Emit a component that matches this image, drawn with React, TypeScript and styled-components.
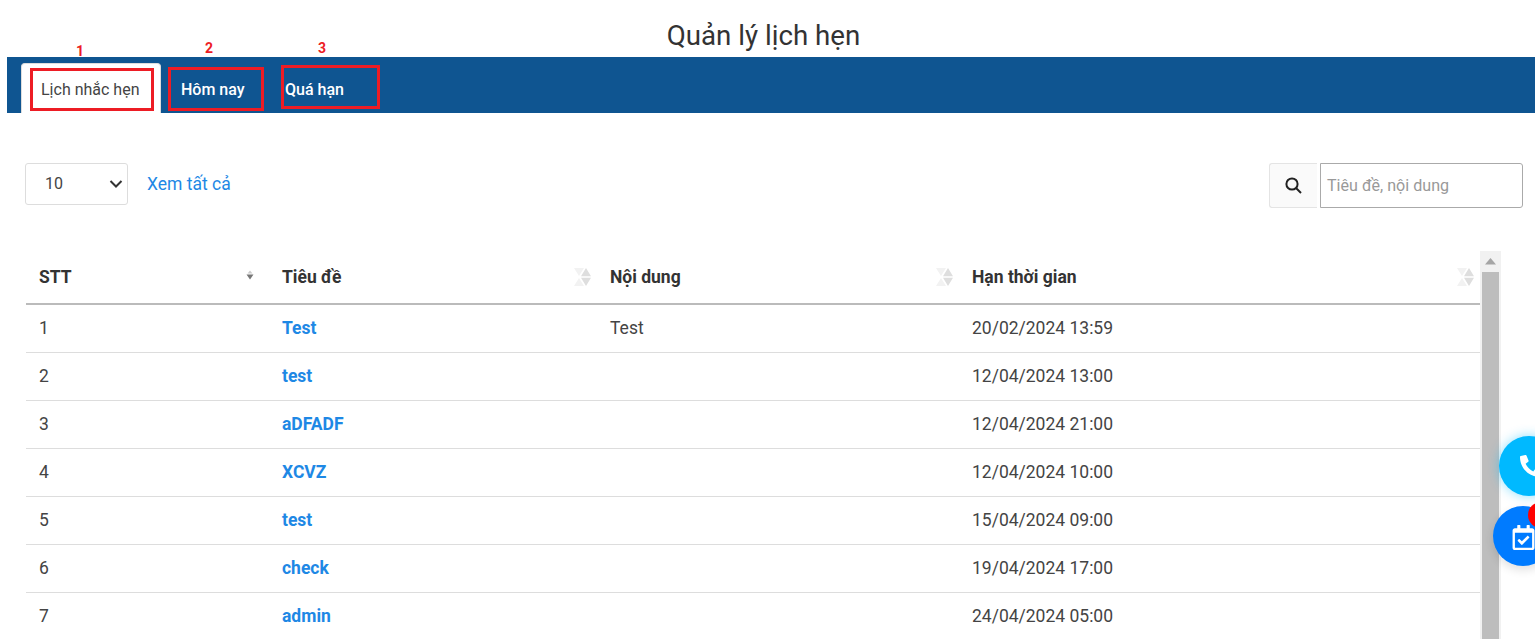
import React from "react";
import styled, { createGlobalStyle } from "styled-components";
import { FaPhoneAlt, FaRegCalendarCheck } from "react-icons/fa";

const GlobalStyle = createGlobalStyle`
  html, body {
    margin: 0;
    height: 639px;
    overflow: hidden;
    background: #fff;
    font-family: Roboto, "Liberation Sans", sans-serif;
    color: #333;
  }
`;

const Page = styled.div`
  padding: 0 12px 0 7px;
  height: 639px;
  overflow: hidden;
`;

const Title = styled.h1`
  margin: 0;
  height: 57px;
  padding: 18px 3px 0 0;
  box-sizing: border-box;
  text-align: center;
  font-size: 27.7px;
  line-height: 35px;
  font-weight: 400;
  color: #333;
`;

const TabBar = styled.div`
  display: flex;
  height: 56px;
  margin-right: -12px;
  padding: 6px 0 0 14px;
  box-sizing: border-box;
  background: #0f5591;
`;

const Tab = styled.div<{ $active?: boolean; $width: number; $pad: number }>`
  position: relative;
  width: ${(p) => p.$width}px;
  padding-left: ${(p) => p.$pad}px;
  box-sizing: border-box;
  line-height: ${(p) => (p.$active ? 52 : 54)}px;
  font-size: 16px;
  font-weight: ${(p) => (p.$active ? 400 : 500)};
  color: ${(p) => (p.$active ? "#444" : "#fff")};
  background: ${(p) => (p.$active ? "#fff" : "transparent")};
  border: ${(p) => (p.$active ? "1px solid #ddd" : "none")};
  border-bottom: none;
  border-radius: 4px 4px 0 0;
`;

const Marker = styled.span<{ $left: number; $top: number; $width: number; $height: number }>`
  position: absolute;
  left: ${(p) => p.$left}px;
  top: ${(p) => p.$top}px;
  width: ${(p) => p.$width}px;
  height: ${(p) => p.$height}px;
  box-sizing: border-box;
  border: 3px solid #ed1c24;
`;

const MarkerNumber = styled.span<{ $left: number; $top: number }>`
  position: absolute;
  left: ${(p) => p.$left}px;
  top: ${(p) => p.$top}px;
  font-size: 14px;
  line-height: 16px;
  font-weight: 700;
  color: #ed1c24;
`;

const Toolbar = styled.div`
  display: flex;
  justify-content: space-between;
  align-items: flex-start;
  height: 88px;
  padding: 50px 0 0 18px;
`;

const LeftTools = styled.div`
  display: flex;
  align-items: center;
  gap: 19px;
`;

const SelectBox = styled.div`
  display: flex;
  align-items: center;
  justify-content: space-between;
  width: 103px;
  height: 42px;
  padding: 0 4px 2px 19px;
  box-sizing: border-box;
  border: 1px solid #ddd;
  border-radius: 3px;
  font-size: 16px;
  color: #444;
`;

const ViewAll = styled.a`
  margin-top: -1px;
  font-size: 17.5px;
  color: #1e88e5;
  text-decoration: none;
`;

const SearchGroup = styled.div`
  display: flex;
  gap: 3px;
`;

const SearchButton = styled.div`
  display: flex;
  align-items: center;
  justify-content: center;
  width: 48px;
  height: 45px;
  box-sizing: border-box;
  background: #fafafa;
  border: 1px solid #e4e4e4;
  border-right: none;
  border-radius: 3px 0 0 3px;
  color: #222;
`;

const SearchInput = styled.div`
  display: flex;
  align-items: center;
  width: 203px;
  height: 45px;
  padding-left: 6px;
  box-sizing: border-box;
  border: 1px solid #aaa;
  border-radius: 0 3px 3px 0;
  font-size: 16.1px;
  color: #999;
`;

const TableArea = styled.div`
  display: flex;
  margin-left: 19px;
`;

const TableBody = styled.div`
  width: 1454px;
`;

const Row = styled.div<{ $head?: boolean }>`
  display: grid;
  grid-template-columns: 243px 328px 362px 521px;
  align-items: center;
  height: ${(p) => (p.$head ? 54 : 48)}px;
  padding-bottom: 1px;
  box-sizing: border-box;
  border-bottom: ${(p) => (p.$head ? "2px solid #bbb" : "1px solid #ddd")};
  font-size: 17.5px;
`;

const HeadCell = styled.div`
  display: flex;
  align-items: center;
  justify-content: space-between;
  padding: 0 6px 0 13px;
  font-weight: 700;
  color: #333;
`;

const Cell = styled.div`
  padding: 0 13px;
  color: #444;
`;

const TitleCell = styled(Cell)`
  font-weight: 700;
  color: #1e88e5;
`;

const SortMark = styled.span`
  display: flex;
  padding: 0 9px 4px 0;
`;

const ScrollTrack = styled.div`
  display: flex;
  flex-direction: column;
  align-items: center;
  width: 21px;
  height: 388px;
  background: #f1f1f1;
`;

const ScrollArrow = styled.div`
  display: flex;
  align-items: center;
  justify-content: center;
  height: 21px;
  width: 100%;
`;

const ScrollThumb = styled.div`
  flex: 1;
  width: 17px;
  background: #bdbdbd;
`;

const FloatButton = styled.div<{ $left: number; $top: number; $color: string; $glow?: boolean }>`
  position: fixed;
  left: ${(p) => p.$left}px;
  top: ${(p) => p.$top}px;
  width: 60px;
  height: 60px;
  border-radius: 50%;
  display: flex;
  align-items: center;
  color: #fff;
  background: ${(p) => p.$color};
  box-shadow: ${(p) =>
    p.$glow ? "0 0 12px rgba(0, 187, 255, 0.45)" : "0 4px 10px rgba(0, 0, 0, 0.12)"};
`;

const PhoneIcon = styled(FaPhoneAlt)`
  margin-left: 21px;
`;

const CalendarIcon = styled(FaRegCalendarCheck)`
  margin: 2px 0 0 18px;
`;

const Badge = styled.span`
  position: absolute;
  left: 35px;
  top: -4px;
  width: 26px;
  height: 26px;
  border-radius: 50%;
  background: #f00;
`;

const SortPair = () => (
  <svg width="17" height="20" viewBox="0 0 17 20">
    <path d="M0 1h10L5 9zM0 19h10L5 11z" fill="#f2f2f2" />
    <path d="M7 9.2L12 1l5 8.2zM7 10.8l5 8.2 5-8.2z" fill="#dedede" />
  </svg>
);

const SortActive = () => (
  <svg width="8" height="10" viewBox="0 0 8 10">
    <path d="M1.5 3.5L4 .5l2.5 3z" fill="#ccc" />
    <path d="M.5 4.5h7L4 9.5z" fill="#777" />
  </svg>
);

const columns = ["Tiêu đề", "Nội dung", "Hạn thời gian"];

const rows = [
  { id: 1, title: "Test", body: "Test", due: "20/02/2024 13:59" },
  { id: 2, title: "test", body: "", due: "12/04/2024 13:00" },
  { id: 3, title: "aDFADF", body: "", due: "12/04/2024 21:00" },
  { id: 4, title: "XCVZ", body: "", due: "12/04/2024 10:00" },
  { id: 5, title: "test", body: "", due: "15/04/2024 09:00" },
  { id: 6, title: "check", body: "", due: "19/04/2024 17:00" },
  { id: 7, title: "admin", body: "", due: "24/04/2024 05:00" },
];

const App: React.FC = () => (
  <Page>
    <GlobalStyle />
    <Title>Quản lý lịch hẹn</Title>
    <TabBar>
      <Tab $active $width={140} $pad={19}>
        Lịch nhắc hẹn
        <Marker $left={8} $top={4} $width={124} $height={43} />
        <MarkerNumber $left={54} $top={-21}>1</MarkerNumber>
      </Tab>
      <Tab $width={113} $pad={20}>
        Hôm nay
        <Marker $left={7} $top={4} $width={96} $height={44} />
        <MarkerNumber $left={44} $top={-23}>2</MarkerNumber>
      </Tab>
      <Tab $width={100} $pad={11}>
        Quá hạn
        <Marker $left={7} $top={2} $width={99} $height={44} />
        <MarkerNumber $left={44} $top={-23}>3</MarkerNumber>
      </Tab>
    </TabBar>
    <Toolbar>
      <LeftTools>
        <SelectBox>
          10
          <svg width="14" height="14" viewBox="0 0 14 14" style={{ marginTop: 2 }}>
            <path d="M1.5 4L7 9.5 12.5 4" fill="none" stroke="#333" strokeWidth="2" />
          </svg>
        </SelectBox>
        <ViewAll>Xem tất cả</ViewAll>
      </LeftTools>
      <SearchGroup>
        <SearchButton>
          <svg width="17" height="17" viewBox="0 0 17 17">
            <circle cx="7" cy="7" r="5.6" fill="none" stroke="currentColor" strokeWidth="2" />
            <path d="M11 11l5 5" fill="none" stroke="currentColor" strokeWidth="2" />
          </svg>
        </SearchButton>
        <SearchInput>Tiêu đề, nội dung</SearchInput>
      </SearchGroup>
    </Toolbar>
    <TableArea>
      <TableBody>
        <Row $head>
          <HeadCell>
            STT
            <SortMark>
              <SortActive />
            </SortMark>
          </HeadCell>
          {columns.map((name) => (
            <HeadCell key={name}>
              {name}
              <SortPair />
            </HeadCell>
          ))}
        </Row>
        {rows.map((row) => (
          <Row key={row.id}>
            <Cell>{row.id}</Cell>
            <TitleCell>{row.title}</TitleCell>
            <Cell>{row.body}</Cell>
            <Cell>{row.due}</Cell>
          </Row>
        ))}
      </TableBody>
      <ScrollTrack>
        <ScrollArrow>
          <svg width="11" height="7" viewBox="0 0 11 7">
            <path d="M0 6.5L5.5 0 11 6.5z" fill="#a5a5a5" />
          </svg>
        </ScrollArrow>
        <ScrollThumb />
      </ScrollTrack>
    </TableArea>
    <FloatButton $left={1499} $top={436} $color="#00b9ff" $glow>
      <PhoneIcon size={22} />
    </FloatButton>
    <FloatButton $left={1493} $top={506} $color="#007bff">
      <CalendarIcon size={25} />
      <Badge />
    </FloatButton>
  </Page>
);

export default App;
